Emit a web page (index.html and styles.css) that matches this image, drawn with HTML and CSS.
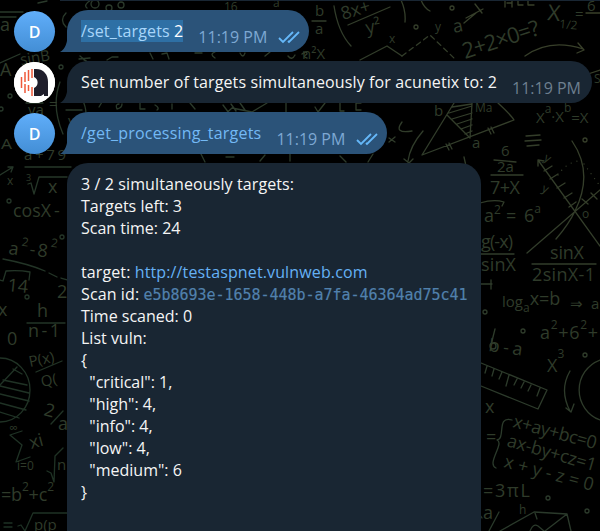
FILE: index.html
```html
<!DOCTYPE html>
<html lang="en">
<head>
<meta charset="utf-8">
<title>Chat</title>
<link rel="stylesheet" href="styles.css">
</head>
<body>
<svg class="wallpaper" width="600" height="531" viewBox="0 0 600 531" aria-hidden="true">
  <defs>
    <linearGradient id="ink" gradientUnits="userSpaceOnUse" x1="0" y1="531" x2="600" y2="0">
      <stop offset="0" stop-color="#1c3023"/><stop offset=".55" stop-color="#2b3a2b"/><stop offset="1" stop-color="#3a4029"/>
    </linearGradient>
  </defs>
  <g class="strokes">
    <path d="M0 12H23M0 17H16M0 63L20 54M26 103H43M38 3L47 1M66 13q-7 7 0 14M60 82q-9 24 3 52M82 99q8 15 0 30M66 110H82M80 56l6 5M91 0q-8 5-4 8M25 167H71M0 175L13 167M8 167h5l-2 5M28 184l3-1 3 11 5-17H67"/>
    <path d="M3 259Q29 264 45 271M49 273l8 4M61 278l7 2M0 280l3 1 3-10q13-1 24 1l-1 8M27 323H65M0 358A30 32 0 0 1 0 422M0 385L17 367M3 380l24 5M0 386l29 7M0 394l29 7M0 403l26 7M0 412l19 6M13 369l9 5M36 372L62 361M51 424L63 411M22 431L10 435 22 445 16 462 30 457M47 471l4 2 3 9 1-26 8-8M18 526l3-1 4 6 8-18H67M4 523h8M4 527h8"/>
    <path d="M312 21h14M334 6q4 26 17 40M348 25L390 7M360 60L387 46 402 56M222 117l10-9 20 4 15-9M223 105l6 8M231 104l5 7M240 103l5 7M286 103v14M340 103v8h4M361 103h-5v7h5M315 107l3 5 7-9" />
    <path d="M79 59l11-1M84 60l4 2M107 60l5-3h6M150 53l3 6M162 54l5-1 2 6M195 53h7M215 52q-6 2 0 6M240 53q3 6 5 0M265 56l5-4M288 56q4 5 7-1M302 54q5-4 5 0-5 3 0 4M99 107l3-5M119 104q-4 0-2 5 5-1 5-5M140 103v6h5M155 105q5 3 2 5M172 104v5M190 103l5 6M201 154l4 8M226 157h8M265 155l-5 6M290 153v8M346 162l-6-6M373 154l-5 8"/>
    <path d="M401 0q5 11 4 22M421 0q3 8 9 11M466 18l17-9M464 23l12-10M475 4l7 9M586 13h14M525 56q25-18 58-7M578 43l6 7-7 3M588 74l12-4M505 0v7M512 0v7M507 3h5M518 0v5h5M528 0v5h6"/>
    <path stroke-dasharray="5 4" d="M402 56L430 35l25 24"/>
    <path d="M454 103L422 155l92-35q-3-5-16-17M447 115l23 23 2-35M452 107l20-3M449 113l23-7M452 119l20-6M457 124l15-5M461 129l11-4M465 134l7-3M446 144l3 6M449 143l3 6M488 128l3 6M491 127l3 6M423 131q-13 15-15 30M404 159l5 4 4-4M402 122q-9 12 10 9M526 136l14-1M525 141l16-1M527 146l12-1M464 157l2 9M389 138l6 4M389 142l6-5"/>
    <path d="M494 160l22 2M491 175h32M480 203q14-4 24-1l-2 4M480 254h34M532 264h64M479 284h13M491 280v9M538 160L600 246M538 166v-6l6 1M527 253L600 190M572 141Q594 173 575 211Q569 224 556 239M544 171l8-5M550 179l8-5M557 188l8-5M564 198l8-5M569 207l7-5M582 199l6 5M591 193l6 6"/>
    <path d="M481 363l66 27-9 19-57-23M487 366l-2 7M494 369l-2 7M502 372l-3 7M509 375l-3 11M517 379l-3 6M524 382l-3 6M531 385l-3 6M540 388l-3 8M570 371q-11 19 0 40M566 408l5 4 3-8M600 360A32 32 0 0 0 600 420M512 420c-16-5-6 19-15 20c8 3-11 24-1 28M474 506l8 12M499 512l-10 19M500 531l34-19 33 2-22 17M535 513l2 6M567 514l4 17M530 531q3-8 8-5l6 5M491 345l4-16"/>
    <path class="dots" d="M558 175q8-12 20-14M584 164l16 22"/>
  </g>
  <g class="rings">
    <circle cx="95" cy="4" r="4"/><circle cx="121" cy="5" r="3"/><circle cx="109" cy="8" r="3"/><circle cx="61" cy="67" r="2"/><circle cx="10" cy="96" r="2"/><circle cx="1" cy="109" r="2"/><circle cx="9" cy="201" r="2"/><circle cx="62" cy="237" r="2"/><circle cx="27" cy="297" r="2"/><circle cx="452" cy="8" r="2"/><circle cx="416" cy="27" r="2"/><circle cx="585" cy="140" r="2"/><circle cx="485" cy="312" r="2"/><circle cx="523" cy="331" r="2"/><circle cx="585" cy="355" r="2"/><circle cx="548" cy="498" r="2"/><circle cx="587" cy="511" r="2"/><circle cx="493" cy="346" r="3"/>
  </g>
  <g class="formula">
    <text x="0" y="31">a</text><text x="0" y="76">A</text>
    <text x="21" y="65" transform="rotate(-9 21 65)" class="m">sinB</text><text x="28" y="115" class="m">ya</text><text x="49" y="109" class="m">=</text><text x="68" y="126" class="m">y</text>
    <text x="1" y="149" class="m" textLength="11" lengthAdjust="spacingAndGlyphs">A</text><text x="24" y="160" class="m" textLength="42">a+79</text><text x="7" y="185" class="s">x</text><text x="26" y="181" class="xs">3</text><text x="48" y="193">x</text>
    <text x="13" y="217" textLength="38" lengthAdjust="spacingAndGlyphs">cosX</text><text x="54" y="217">-</text>
    <text x="8" y="254" textLength="48" transform="rotate(8 8 254)">a<tspan dy="-10" class="s">2</tspan><tspan dy="8">-8</tspan><tspan dy="-11" class="s">2</tspan></text>
    <text x="7" y="291" transform="rotate(6 7 291)">14</text><text x="-2" y="316">x</text><text x="37" y="317">h</text><text x="57" y="298">2</text><text x="28" y="337" textLength="32">n-1</text><text x="7" y="345">0</text>
    <text x="30" y="367" transform="rotate(-12 30 367)" class="m">P(x)</text><text x="42" y="387" transform="rotate(-12 42 387)" class="m">Q(</text>
    <text x="43" y="415" transform="rotate(15 43 415)">2</text><text x="58" y="430">a</text><text x="9" y="432" class="s">∞</text><text x="31" y="449" transform="rotate(-15 31 449)">xi</text><text x="17" y="470" class="s">i=0</text><text x="57" y="470" class="m">n</text>
    <text x="1" y="501" textLength="53">=b<tspan dy="-10" class="s">2</tspan><tspan dy="10">+c</tspan><tspan dy="-10" class="s">2</tspan></text><text x="34" y="530" class="m">p(p</text>
    <text x="224" y="11" class="s">16</text><text x="273" y="7" class="s">a</text><text x="315" y="16" class="m">b</text><text x="315" y="34" class="m">a</text><text x="343" y="20" transform="rotate(-17 343 20)">8x+</text><text x="367" y="34" transform="rotate(-12 367 34)">y²</text>
    <text x="389" y="43" class="s">x</text><text x="302" y="59" class="m">n²X</text>
    <text x="435" y="31" class="s">y</text><text x="454" y="33" transform="rotate(-12 454 33)">a</text>
    <text x="465" y="59" transform="rotate(-18 465 59)" class="l" textLength="80">2+2×0=?</text><text x="547" y="20" class="l" transform="rotate(5 547 20)">X<tspan dy="7" class="s">1/2</tspan></text><text x="575" y="19" class="m">=</text><text x="587" y="11" class="m">6</text><text x="594" y="83" class="s">S</text>
    <text x="434" y="116" class="m">b</text><text x="475" y="112" class="s">Ma</text><text x="472" y="148" class="m">a</text>
    <text x="536" y="123" class="m">X<tspan dy="-10" class="s">a</tspan><tspan dy="9">·X</tspan><tspan dy="-10" class="s">b</tspan><tspan dy="11">=X</tspan></text>
    <text x="501" y="156" class="m">6</text><text x="497" y="172" class="m">2a</text><text x="490" y="194" textLength="30">7+X</text><text x="484" y="222">a<tspan dy="-8" class="s">2</tspan></text><text x="506" y="222">=</text><text x="524" y="222">6<tspan dy="-9" class="s">a</tspan></text>
    <text x="543" y="160" class="s" transform="rotate(30 543 160)">y</text><text x="541" y="191" class="s" transform="rotate(25 541 191)">y</text><text x="582" y="218" class="s">o</text>
    <text x="481" y="248" textLength="32">g(-x)</text><text x="481" y="271" textLength="35">sinX</text><text x="550" y="259" textLength="34">sinX</text><text x="532" y="281" textLength="63">2sinX-1</text>
    <text x="502" y="307" class="m">log<tspan dy="5" class="s">a</tspan><tspan dy="-7" class="n">x=b</tspan></text><text x="570" y="309" class="m">⇒</text><text x="591" y="309" class="m">a</text><text x="540" y="339" textLength="58">a<tspan dy="-10" class="s">2</tspan><tspan dy="10">+6</tspan><tspan dy="-10" class="s">2</tspan><tspan dy="10">+</tspan></text>
    <text x="488" y="351" transform="rotate(8 488 351)" class="n" textLength="34">b-a</text><text x="547" y="372">X<tspan dy="-14" class="s">3</tspan></text><text x="485" y="413">x</text>
    <text x="486" y="443">=</text><text x="512" y="427" textLength="86" transform="rotate(15 512 427)">x+ay+bc=0</text><text x="506" y="446" textLength="92" transform="rotate(16 506 446)">ax-by+cz=1</text><text x="503" y="467" textLength="92" transform="rotate(15 503 467)">x + y - z = 0</text>
    <text x="483" y="497" textLength="47">=3πL</text><text x="519" y="514" class="s">h</text><text x="483" y="519">a</text>
  </g>
</svg>

<main class="chat">
  <div class="previous"></div>
  <div class="row">
    <div class="avatar">D</div>
    <div class="bubble own tailed">
      <svg class="tail" viewBox="0 0 8 22"><path d="M8 0V22H0Q8 18 8 0Z"/></svg>
      <span class="command selected">/set_targets <b>2</b></span><time>11:19 PM</time>
      <svg class="ticks" viewBox="0 0 22 14"><path d="M1 8l4 4L15 2M10 11l1 1L21 2"/></svg>
    </div>
  </div>
  <div class="row">
    <div class="avatar brand">
      <svg viewBox="0 0 41 41"><circle cx="20.5" cy="20.5" r="20.5" fill="#fff"/><path d="M20 7h2c8 0 12 6 12 13v14h-4v-2l-3 2h-7v-8a6 6 0 0 0 0-11Z" fill="#1f1e2b"/><path d="M7.500 15v11M11 10v10M11 22v9M14.500 8v11M14.500 23v6M18 7v9M18 25v9" fill="none" stroke="#f0593a" stroke-width="1.500"/></svg>
    </div>
    <div class="bubble tailed">
      <svg class="tail" viewBox="0 0 8 22"><path d="M8 0V22H0Q8 18 8 0Z"/></svg>
      <span class="message">Set number of targets simultaneously for acunetix to: 2</span><time>11:19 PM</time>
    </div>
  </div>
  <div class="row">
    <div class="avatar">D</div>
    <div class="bubble own tailed">
      <svg class="tail" viewBox="0 0 8 22"><path d="M8 0V22H0Q8 18 8 0Z"/></svg>
      <span class="command">/get_processing_targets</span><time>11:19 PM</time>
      <svg class="ticks" viewBox="0 0 22 14"><path d="M1 8l4 4L15 2M10 11l1 1L21 2"/></svg>
    </div>
  </div>
  <div class="report"><span class="message">3 / 2 simultaneously targets:</span>
Targets left: 3
Scan time: 24

<span class="message">target: </span><span class="link">http://testaspnet.vulnweb.com</span>
<span class="message">Scan id: </span><code>e5b8693e-1658-448b-a7fa-46364ad75c41</code>
Time scaned: 0
List vuln:
{
  "critical": 1,
  "high": 4,
  "info": 4,
  "low": 4,
  "medium": 6
}</div>
</main>
</body>
</html>
```
FILE: styles.css
```css
* { box-sizing: border-box; }
body {
  margin: 0;
  height: 531px;
  overflow: hidden;
  background: #000;
  color: #f5f5f5;
  font: 16px/22px "Open Sans", sans-serif;
}
.wallpaper { position: absolute; inset: 0; }
.strokes, .rings { fill: none; stroke: url(#ink); stroke-width: 1.3; stroke-linecap: round; stroke-linejoin: round; }
.dots { stroke-dasharray: 0 6; }
.formula { fill: #2f3b2a; font: 400 18px "Open Sans", sans-serif; }
.formula .m { font-size: 15px; }
.formula .n { font-size: 18px; }
.formula .l { font-size: 22px; }
.formula .s { font-size: 12px; }
.formula .xs { font-size: 9px; }
.chat {
  position: relative;
  height: 531px;
  overflow: hidden;
  display: flex;
  flex-direction: column;
  align-items: flex-start;
  gap: 9px;
}
.previous { flex: none; width: 100%; height: 1px; padding-left: 60px; background: #192633 content-box; }
.row { flex: none; display: flex; align-items: flex-end; gap: 12px; padding-left: 14px; height: 42px; }
.avatar {
  width: 41px;
  height: 41px;
  border-radius: 50%;
  background: linear-gradient(#60aefa, #438ed5);
  color: #fff;
  font-weight: 600;
  line-height: 42px;
  text-align: center;
}
.brand { background: #fff; }
.brand svg { display: block; }
.bubble {
  --fill: #192633;
  position: relative;
  display: flex;
  height: 42px;
  padding: 10px 11px 0 14px;
  border-radius: 21px 21px 21px 0;
  background: var(--fill);
  white-space: pre;
}
.own { --fill: #2b5379; }
.tail { position: absolute; left: -7px; bottom: 0; width: 8px; height: 22px; fill: var(--fill); }
.message { letter-spacing: .11px; }
.command { color: #73b9f5; letter-spacing: .2px; }
.selected { height: 22px; color: #a8d6fa; background: #2e70a5; letter-spacing: .12px; }
.selected b { color: #fff; font-weight: 400; }
time { margin-left: 15px; padding-top: 6px; color: #6d7f8f; }
.own time { color: #7da8d3; }
.ticks { width: 22px; height: 14px; margin: 10px -2px 0 11px; }
.ticks path { fill: none; stroke: #65b8f9; stroke-width: 1.8; }
.report {
  width: 414px;
  height: 400px;
  flex: none;
  margin-left: 67px;
  padding: 10px 14px;
  border-radius: 21px 21px 0 0;
  background: #192633;
  white-space: pre;
}
.link { color: #65b1f5; letter-spacing: .13px; }
code { color: #5181ad; font: 15px/20px "DejaVu Sans Mono", monospace; letter-spacing: -.03px; -webkit-text-stroke: .2px; }
```
